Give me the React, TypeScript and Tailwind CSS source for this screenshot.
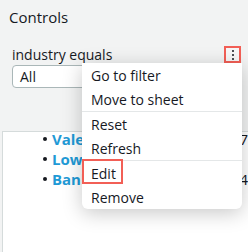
const items = ['Go to filter', 'Move to sheet', 'Reset', 'Refresh', 'Edit', 'Remove']

export default function App() {
  return (
    <div className="relative w-[248px] h-[252px] overflow-hidden bg-[#f2f3f3] text-[#16191f] font-['Open_Sans',sans-serif] flex flex-col">
      <div className="pt-[7px] pl-[9px] text-[15px] leading-[20px]">Controls</div>

      <div className="mt-[19px] h-[17px] pl-[12px] pr-[7px] flex items-center justify-between">
        <span className="text-[14px] leading-[17px]">industry equals</span>
        <button className="w-[17px] h-[17px] border-2 border-[#f25f56] bg-[#f7f7f7] flex flex-col items-center justify-center gap-[2px]">
          <span className="w-[2px] h-[2px] rounded-full bg-[#16191f]" />
          <span className="w-[2px] h-[2px] rounded-full bg-[#16191f]" />
          <span className="w-[2px] h-[2px] rounded-full bg-[#16191f]" />
        </button>
      </div>

      <div className="mt-[2px] ml-[12px] w-[200px] h-[23px] rounded-[4px] border border-[#aab7b8] bg-white flex items-center pl-[7px] text-[14px]">
        All
      </div>

      <div className="mt-[43px] ml-[2px] flex-1 bg-white border-l border-t border-[#d5dbdb] overflow-hidden">
        <ul className="-mt-[3px] font-bold text-[15px] leading-[20px]">
          {[
            ['Valero Energy', '7'],
            ['Lowe', ''],
            ['Bank of America', '4'],
          ].map(([name, val]) => (
            <li key={name} className="flex items-center h-[20px] whitespace-nowrap">
              <span className="ml-[40px] mr-[5px] w-[4px] h-[4px] rounded-full bg-[#16191f]" />
              <span className="text-[#1f9ad6] w-[191px]">{name}</span>
              <span className="font-normal text-[#16191f]">{val}</span>
            </li>
          ))}
        </ul>
      </div>

      <div className="absolute left-[82px] top-[63px] w-[160px] bg-white rounded-b-[6px] shadow-[0_4px_20px_rgba(0,0,0,0.22)]">
        {items.map((label, i) => (
          <div key={label}>
            {(i === 2 || i === 4) && <div className="h-px bg-[#e4e7e8]" />}
            <div className="h-[24px] pl-[9px] flex items-center text-[14px]">{label}</div>
          </div>
        ))}
        <div className="absolute left-0 top-[96px] w-[41px] h-[25px] border-2 border-[#f25f56]" />
      </div>
    </div>
  )
}
